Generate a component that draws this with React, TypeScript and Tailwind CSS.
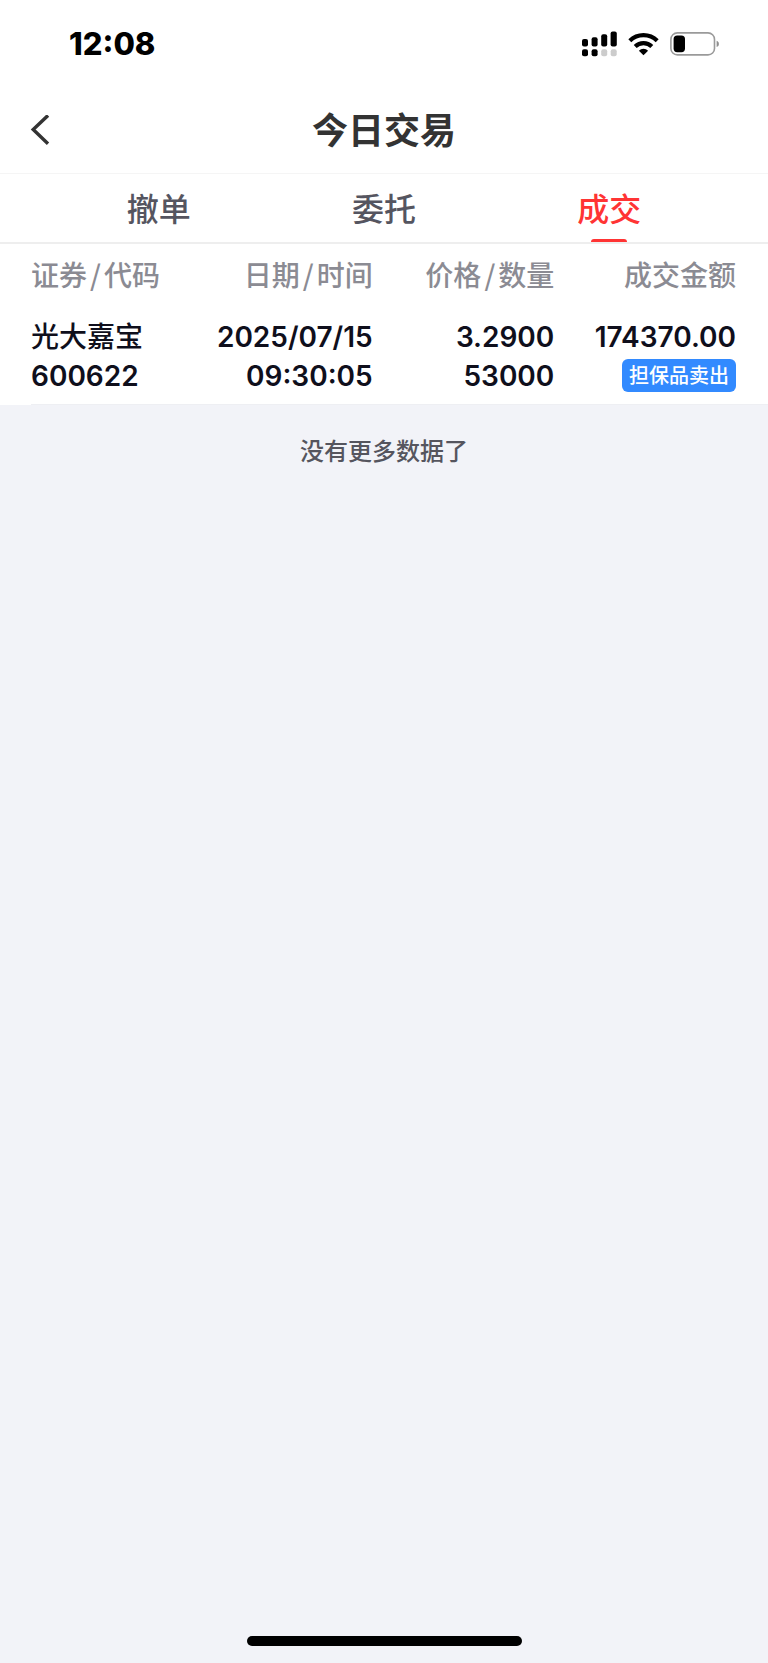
import { useState } from "react";

const tabs = ["撤单", "委托", "成交"];

const trades = [
  {
    name: "光大嘉宝",
    code: "600622",
    date: "2025/07/15",
    time: "09:30:05",
    price: "3.2900",
    quantity: "53000",
    amount: "174370.00",
    type: "担保品卖出",
  },
];

function SignalIcon() {
  return (
    <svg width="35" height="26" viewBox="0 0 35 26" aria-hidden="true">
      <rect x="0" y="8" width="6" height="7.5" rx="2" />
      <rect x="9.6" y="6.2" width="6" height="9.3" rx="2" />
      <rect x="19.2" y="3.2" width="6" height="12.3" rx="2" />
      <rect x="28.6" y="0.5" width="6.2" height="15" rx="2" />
      <rect x="0" y="18.2" width="6" height="7" rx="2" />
      <rect x="9.6" y="18.2" width="6" height="7" rx="2" />
      <rect x="19.2" y="18.2" width="6" height="7" rx="2" fill="#cccccc" />
      <rect x="28.7" y="18.2" width="6" height="7" rx="2" fill="#cccccc" />
    </svg>
  );
}

function WifiIcon() {
  return (
    <svg width="31" height="24" viewBox="0 0 31 24" aria-hidden="true">
      <path
        d="M1.8 8.8a19.6 19.6 0 0 1 27.4 0M7.2 14.4a11.9 11.9 0 0 1 16.6 0"
        fill="none"
        stroke="#000000"
        strokeWidth="4.2"
      />
      <path d="M15.5 23.2l-4.6-4.5a6.6 6.6 0 0 1 9.2 0z" />
    </svg>
  );
}

function BatteryIcon() {
  return (
    <svg width="49" height="24" viewBox="0 0 49 24" aria-hidden="true">
      <rect
        x="0.9"
        y="0.9"
        width="43.6"
        height="22"
        rx="6.5"
        fill="none"
        stroke="#9a9a9a"
        strokeWidth="1.6"
      />
      <rect x="3.6" y="3.4" width="11.4" height="16.8" rx="3.6" />
      <path d="M46.6 8.8c1.5.5 2.3 1.7 2.3 3.1s-.8 2.6-2.3 3.1z" fill="#8f8f8f" />
    </svg>
  );
}

function StatusBar() {
  return (
    <div className="flex h-[88px] items-center justify-between pl-[69px] pr-[49px] text-black">
      <span className="text-[31px] font-extrabold">12:08</span>
      <div className="flex items-center gap-[11px]">
        <SignalIcon />
        <WifiIcon />
        <BatteryIcon />
      </div>
    </div>
  );
}

function PairHeading({ first, second }: { first: string; second: string }) {
  return (
    <>
      {first}
      <span className="px-[3px]">/</span>
      {second}
    </>
  );
}

export default function App() {
  const [active, setActive] = useState("成交");

  return (
    <main className="flex min-h-screen flex-col bg-[#f2f3f8] font-['Inter','Noto_Sans_CJK_SC',sans-serif]">
      <div className="bg-white">
        <StatusBar />

        <header className="grid h-[86px] grid-cols-[1fr_auto_1fr] items-center border-b border-[#f5f5f5] px-[30px]">
          <button type="button" aria-label="返回" className="justify-self-start">
            <svg width="20" height="32" viewBox="0 0 20 32" fill="none">
              <path d="M18 0.4L3.2 14.6 18 28.8" stroke="#333333" strokeWidth="3.4" />
            </svg>
          </button>
          <h1 className="text-4xl font-bold text-[#333333]">今日交易</h1>
        </header>

        <nav className="flex h-[70px] border-b-2 border-[#eeeeee] px-[46px]">
          {tabs.map((tab) => (
            <button
              key={tab}
              type="button"
              aria-pressed={tab === active}
              onClick={() => setActive(tab)}
              className={
                tab === active
                  ? "flex flex-1 flex-col items-center text-[32px] font-medium text-[#ff3434]"
                  : "flex flex-1 flex-col items-center text-[32px] font-medium text-[#555560]"
              }
            >
              <span className="flex flex-1 items-center pt-1">{tab}</span>
              {tab === active && (
                <span className="-mt-[3px] h-[3px] w-9 rounded-t-sm bg-[#ff3434]" />
              )}
            </button>
          ))}
        </nav>

        <div className="pl-[31px]">
          <div className="border-b border-[#eeeff3] pr-8">
            <table className="w-full table-fixed text-right text-[28px] leading-[39px]">
              <colgroup>
                <col className="w-40" />
                <col />
                <col />
                <col />
              </colgroup>
              <thead>
                <tr className="h-[62px] whitespace-nowrap font-['Noto_Sans_CJK_SC',sans-serif] text-[#8b8b93]">
                  <th scope="col" className="pb-[2px] text-left font-medium">
                    <PairHeading first="证券" second="代码" />
                  </th>
                  <th scope="col" className="pb-[2px] font-medium">
                    <PairHeading first="日期" second="时间" />
                  </th>
                  <th scope="col" className="pb-[2px] font-medium">
                    <PairHeading first="价格" second="数量" />
                  </th>
                  <th scope="col" className="pb-[2px] font-medium">成交金额</th>
                </tr>
              </thead>
              <tbody>
                {trades.map((trade) => (
                  <tr
                    key={trade.code + trade.time}
                    className="whitespace-nowrap align-top font-semibold text-[#0f0f1c]"
                  >
                    <td className="pb-2 pt-3 text-left">
                      <div className="font-medium">{trade.name}</div>
                      <div>{trade.code}</div>
                    </td>
                    <td className="pb-2 pt-3">
                      <div>{trade.date}</div>
                      <div>{trade.time}</div>
                    </td>
                    <td className="pb-2 pt-3">
                      <div>{trade.price}</div>
                      <div>{trade.quantity}</div>
                    </td>
                    <td className="pb-2 pt-3">
                      <div>{trade.amount}</div>
                      <div className="flex h-9 items-center justify-end">
                        <span className="rounded-md bg-[#328aff] px-[7px] pt-[2px] text-xl font-medium leading-[31px] text-white">
                          {trade.type}
                        </span>
                      </div>
                    </td>
                  </tr>
                ))}
              </tbody>
            </table>
          </div>
        </div>
      </div>

      <p className="mt-[29px] text-center text-2xl font-medium leading-9 text-[#55555e]">
        没有更多数据了
      </p>

      <div className="mx-auto mb-[17px] mt-auto h-[10px] w-[275px] rounded-full bg-black" />
    </main>
  );
}
